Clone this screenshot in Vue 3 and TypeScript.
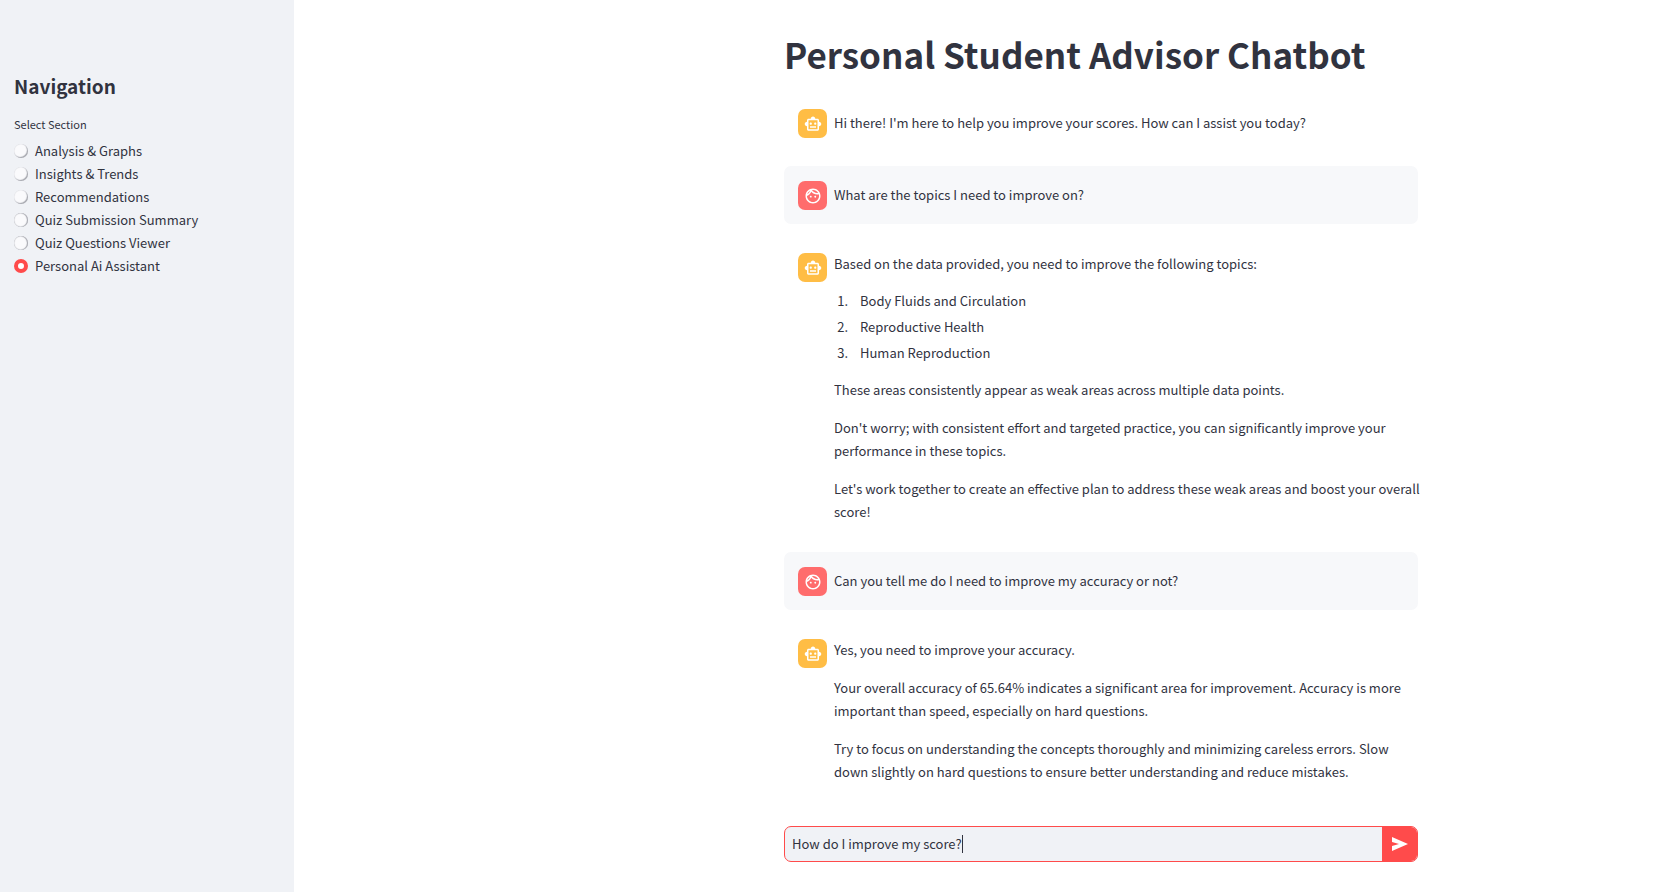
<script setup lang="ts">
import { ref } from 'vue'

type Block = { kind: 'text'; text: string } | { kind: 'list'; items: string[] }
interface Message {
  role: 'assistant' | 'user'
  blocks: Block[]
}

const text = (value: string): Block => ({ kind: 'text', text: value })

const sections: string[] = [
  'Analysis & Graphs',
  'Insights & Trends',
  'Recommendations',
  'Quiz Submission Summary',
  'Quiz Questions Viewer',
  'Personal Ai Assistant',
]
const selected = ref('Personal Ai Assistant')
const draft = ref('How do I improve my score?')

const messages = ref<Message[]>([
  {
    role: 'assistant',
    blocks: [text("Hi there! I'm here to help you improve your scores. How can I assist you today?")],
  },
  { role: 'user', blocks: [text('What are the topics I need to improve on?')] },
  {
    role: 'assistant',
    blocks: [
      text('Based on the data provided, you need to improve the following topics:'),
      { kind: 'list', items: ['Body Fluids and Circulation', 'Reproductive Health', 'Human Reproduction'] },
      text('These areas consistently appear as weak areas across multiple data points.'),
      text("Don't worry; with consistent effort and targeted practice, you can significantly improve your performance in these topics."),
      text("Let's work together to create an effective plan to address these weak areas and boost your overall score!"),
    ],
  },
  { role: 'user', blocks: [text('Can you tell me do I need to improve my accuracy or not?')] },
  {
    role: 'assistant',
    blocks: [
      text('Yes, you need to improve your accuracy.'),
      text('Your overall accuracy of 65.64% indicates a significant area for improvement. Accuracy is more important than speed, especially on hard questions.'),
      text('Try to focus on understanding the concepts thoroughly and minimizing careless errors. Slow down slightly on hard questions to ensure better understanding and reduce mistakes.'),
    ],
  },
])

function send(): void {
  const value = draft.value.trim()
  if (!value) return
  messages.value.push({ role: 'user', blocks: [text(value)] })
  draft.value = ''
}
</script>

<template>
  <div class="app">
    <aside class="sidebar">
      <h2>Navigation</h2>
      <fieldset class="sections">
        <legend>Select Section</legend>
        <label v-for="section in sections" :key="section" class="option">
          <input v-model="selected" type="radio" name="section" :value="section" />
          <span>{{ section }}</span>
        </label>
      </fieldset>
    </aside>

    <main class="main">
      <div class="column">
        <h1>Personal Student Advisor Chatbot</h1>

        <div class="messages">
          <article v-for="(message, i) in messages" :key="i" class="message" :class="message.role">
            <div class="avatar">
              <svg v-if="message.role === 'assistant'" viewBox="0 0 24 24" aria-hidden="true">
                <path d="M20 9V7c0-1.1-.9-2-2-2h-3c0-1.66-1.34-3-3-3S9 3.34 9 5H6c-1.1 0-2 .9-2 2v2c-1.66 0-3 1.34-3 3s1.34 3 3 3v4c0 1.1.9 2 2 2h12c1.1 0 2-.9 2-2v-4c1.66 0 3-1.34 3-3s-1.34-3-3-3zm-2 10H6V7h12v12zM9 13c-.83 0-1.5-.67-1.5-1.5S8.17 10 9 10s1.5.67 1.5 1.5S9.83 13 9 13zm7.5-1.5c0 .83-.67 1.5-1.5 1.5s-1.5-.67-1.5-1.5.67-1.5 1.5-1.5 1.5.67 1.5 1.5zM8 15h8v2H8v-2z" />
              </svg>
              <svg v-else viewBox="0 0 24 24" aria-hidden="true">
                <path d="M10.25 13c0 .69-.56 1.25-1.25 1.25S7.75 13.69 7.75 13s.56-1.25 1.25-1.25 1.25.56 1.25 1.25zM15 11.75c-.69 0-1.25.56-1.25 1.25s.56 1.25 1.25 1.25 1.25-.56 1.25-1.25-.56-1.25-1.25-1.25zM22 12c0 5.52-4.48 10-10 10S2 17.52 2 12 6.48 2 12 2s10 4.48 10 10zM10.66 4.12C12.06 6.44 14.6 8 17.5 8c.46 0 .91-.05 1.34-.12C17.44 5.56 14.9 4 12 4c-.46 0-.91.05-1.34.12zM4.42 9.47c1.71-.97 3.03-2.55 3.66-4.44C6.37 6 5.05 7.58 4.42 9.47zM20 12c0-.78-.12-1.53-.33-2.24-.7.15-1.42.24-2.17.24-3.13 0-5.92-1.44-7.76-3.69C8.69 8.87 6.6 10.88 4 11.86c.01.04 0 .09 0 .14 0 4.42 3.58 8 8 8s8-3.58 8-8z" />
              </svg>
            </div>
            <div class="body">
              <template v-for="(block, j) in message.blocks" :key="j">
                <p v-if="block.kind === 'text'">{{ block.text }}</p>
                <ol v-else>
                  <li v-for="item in block.items" :key="item">{{ item }}</li>
                </ol>
              </template>
            </div>
          </article>
        </div>

        <form class="composer" @submit.prevent="send">
          <label class="field">
            <input v-model="draft" type="text" aria-label="Your message" />
            <span class="caret"></span>
          </label>
          <button type="submit" aria-label="Send message">
            <svg viewBox="0 0 16 14" aria-hidden="true">
              <path d="M0 0L16 7L0 14V9L7 7L0 5Z" />
            </svg>
          </button>
        </form>
      </div>
    </main>
  </div>
</template>

<style>
body {
  margin: 0;
  background: #ffffff;
}
</style>

<style scoped>
.app {
  display: grid;
  grid-template-columns: 294px 1fr;
  min-height: 100vh;
  color: #31333f;
  font-family: "Noto Sans CJK SC", "Noto Sans", sans-serif;
  font-size: 13px;
  line-height: 23px;
}
.sidebar {
  box-sizing: border-box;
  padding: 71px 14px 14px;
  background: #f0f2f6;
}
h1,
h2 {
  margin: 0;
  font-weight: 700;
}
h2 {
  font-size: 19px;
  line-height: 30px;
}
.sections {
  margin: 13px 0 0;
  padding: 0;
  border: 0;
}
legend {
  padding: 0;
  margin-bottom: 4px;
  font-size: 11px;
  line-height: 21px;
}
.option {
  display: flex;
  align-items: center;
  gap: 7px;
  cursor: pointer;
}
.option input {
  appearance: none;
  box-sizing: border-box;
  width: 14px;
  height: 14px;
  margin: 0;
  border-radius: 50%;
  background: #fafafc;
  box-shadow: inset -1px -1px 1px #a3a5ac, inset 0 0 1px #c4c6cc;
}
.option:nth-of-type(n + 4) input {
  box-shadow: inset -1px 0 1px #a3a5ac, inset 0 0 1px #8b8d96;
}
.option input:checked,
.option:nth-of-type(n + 4) input:checked {
  border: 4px solid #ff4b4b;
  background: #ffffff;
  box-shadow: none;
}
.main {
  display: grid;
  grid-template-columns: 490fr 634fr 237fr;
}
.column {
  grid-column: 2;
  display: flex;
  flex-direction: column;
  min-width: 0;
  padding: 30px 0;
}
h1 {
  font-size: 35px;
  line-height: 48px;
}
.messages {
  display: flex;
  flex-direction: column;
  gap: 14px;
  margin: 16px 0 14px;
}
.message {
  box-sizing: border-box;
  display: flex;
  gap: 7px;
  min-height: 58px;
  padding: 15px 0 14px 14px;
  border-radius: 7px;
}
.user {
  background: #f7f8fa;
}
.avatar {
  flex: none;
  display: flex;
  align-items: center;
  justify-content: center;
  width: 29px;
  height: 29px;
  border-radius: 7px;
  background: #ffbd45;
}
.user .avatar {
  background: #ff6c6c;
}
.avatar svg {
  width: 18px;
  height: 18px;
  fill: #ffffff;
}
.body {
  flex: 1;
  min-width: 0;
  display: flex;
  flex-direction: column;
  margin: -1px -4px 0 0;
  padding-bottom: 1px;
}
.body p:only-child {
  margin: auto 0;
}
p {
  margin: 0;
}
p + p {
  margin-top: 15px;
}
ol {
  display: flex;
  flex-direction: column;
  gap: 3px;
  margin: 14px 0;
  padding-left: 17px;
}
li {
  padding-left: 9px;
}
.composer {
  display: flex;
  box-sizing: border-box;
  height: 36px;
  margin-top: auto;
  overflow: hidden;
  border: 1px solid #ff4b4b;
  border-radius: 7px;
  background: #f0f2f6;
}
.field {
  flex: 1;
  display: flex;
  align-items: center;
  min-width: 0;
  padding: 0 7px;
  cursor: text;
}
.field input {
  field-sizing: content;
  max-width: 100%;
  padding: 0 0 2px;
  border: 0;
  outline: 0;
  background: transparent;
  color: inherit;
  font: inherit;
  caret-color: transparent;
}
.caret {
  width: 1px;
  height: 18px;
  background: #31333f;
}
button {
  display: flex;
  align-items: center;
  justify-content: center;
  width: 35px;
  padding: 0;
  border: 0;
  background: #ff4b4b;
  cursor: pointer;
}
button svg {
  width: 16px;
  height: 14px;
  fill: #ffffff;
}
</style>
